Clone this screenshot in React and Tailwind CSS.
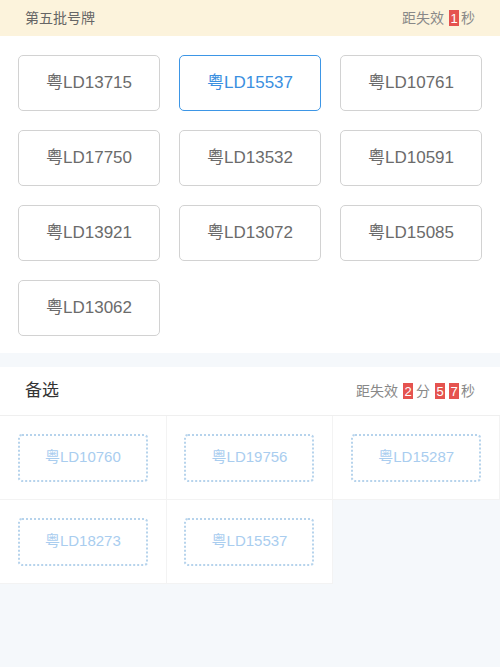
import React from 'react';

const font = { fontFamily: '"Liberation Sans", "Noto Sans CJK SC", sans-serif' };

const batch = [
  'LD13715', 'LD15537', 'LD10761',
  'LD17750', 'LD13532', 'LD10591',
  'LD13921', 'LD13072', 'LD15085',
  'LD13062',
];

const spare = ['LD10760', 'LD19756', 'LD15287', 'LD18273', 'LD15537'];

const Digit = ({ children }) => (
  <span className="inline-flex items-center justify-center w-[10px] h-[16px] bg-[#e5534f] text-white text-[13px] leading-none mx-[2px]">
    {children}
  </span>
);

export default function App() {
  return (
    <div className="w-[500px] min-h-[667px] bg-[#f5f8fb]" style={font}>
      {/* batch header */}
      <div className="h-[36px] bg-[#fcf3dc] flex items-center justify-between pl-[25px] pr-[25px]">
        <span className="text-[14px] text-[#666]">第五批号牌</span>
        <span className="flex items-center text-[14px] text-[#888]">
          距失效<span className="ml-[3px]"><Digit>1</Digit></span>秒
        </span>
      </div>

      {/* batch plates */}
      <div className="bg-white px-[18px] pt-[19px] pb-[17px] grid grid-cols-3 gap-x-[19px] gap-y-[19px]">
        {batch.map((p, i) => {
          const active = i === 1;
          return (
            <div
              key={p}
              className={
                active
                  ? 'h-[56px] rounded-[5px] border border-[#3d96e6] flex items-center justify-center text-[17px] text-[#3a8fe0]'
                  : 'h-[56px] rounded-[5px] border border-[#d2d2d2] flex items-center justify-center text-[17px] text-[#6b6b6b]'
              }
            >
              粤{p}
            </div>
          );
        })}
      </div>

      {/* spare header */}
      <div className="mt-[14px] h-[49px] bg-white border-b border-[#efefef] flex items-center justify-between pl-[25px] pr-[25px]">
        <span className="text-[17px] text-[#333]">备选</span>
        <span className="flex items-center text-[14px] text-[#888]">
          距失效<span className="ml-[3px]"><Digit>2</Digit></span>
          <span className="mx-[1px]">分</span>
          <span className="ml-[2px] flex"><Digit>5</Digit><Digit>7</Digit></span>秒
        </span>
      </div>

      {/* spare plates */}
      <div className="grid grid-cols-3">
        {spare.map((p, i) => (
          <div
            key={p + i}
            className="h-[84px] bg-white border-r border-b border-[#f3f3f3] flex items-center justify-center"
          >
            <div className="w-[130px] h-[48px] rounded-[4px] border-2 border-dotted border-[#b6d3ec] flex items-center justify-center text-[15px] text-[#a9cdef]">
              粤{p}
            </div>
          </div>
        ))}
      </div>
    </div>
  );
}
